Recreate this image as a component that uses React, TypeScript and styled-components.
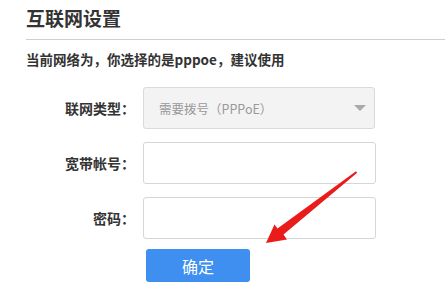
import React from 'react';
import styled, { createGlobalStyle } from 'styled-components';

const GlobalStyle = createGlobalStyle`
  html, body {
    margin: 0;
    padding: 0;
    background: #fff;
  }
  body {
    font-family: "Noto Sans CJK SC", "Noto Sans", sans-serif;
    color: #333;
  }
`;

const Page = styled.div`
  position: relative;
  width: 445px;
  height: 307px;
  overflow: hidden;
  padding-left: 26px;
  box-sizing: border-box;
`;

const Title = styled.h1`
  margin: 0;
  padding: 5px 0 8px;
  font-size: 19px;
  line-height: 26px;
  font-weight: 700;
  color: #333;
  border-bottom: 1px solid #cfcfcf;
`;

const Notice = styled.p`
  margin: 9px 0 0;
  font-size: 13.5px;
  line-height: 20px;
  font-weight: 700;
  color: #333;
`;

const Form = styled.div`
  display: grid;
  grid-template-columns: 109px 233px;
  grid-auto-rows: 42px;
  column-gap: 8px;
  row-gap: 13px;
  margin-top: 18px;
`;

const Label = styled.label`
  display: flex;
  align-items: center;
  justify-content: flex-end;
  font-size: 14px;
  font-weight: 700;
  color: #333;
  white-space: nowrap;
`;

const Select = styled.div`
  display: flex;
  align-items: center;
  justify-content: space-between;
  box-sizing: border-box;
  width: 232px;
  padding: 0 8px 0 15px;
  background: #f3f3f3;
  border: 1px solid #dadada;
  border-radius: 3px;
  font-size: 12.5px;
  color: #999;
`;

const Caret = styled.span`
  width: 0;
  height: 0;
  border-left: 6px solid transparent;
  border-right: 6px solid transparent;
  border-top: 6px solid #aaa;
`;

const Input = styled.input`
  box-sizing: border-box;
  width: 233px;
  height: 100%;
  border: 1px solid #d6d6d6;
  border-radius: 3px;
  background: #fff;
  outline: none;
  padding: 0 10px;
  font-size: 13px;
`;

const Actions = styled.div`
  margin: 10px 0 0 120px;
`;

const Button = styled.button`
  width: 104px;
  height: 33px;
  border: none;
  border-radius: 3px;
  background: #3e8ff0;
  color: #fff;
  font-family: "Noto Sans CJK SC", sans-serif;
  font-size: 16px;
  cursor: pointer;
`;

const Overlay = styled.svg`
  position: absolute;
  left: 0;
  top: 0;
  pointer-events: none;
`;

export default function App() {
  return (
    <>
      <GlobalStyle />
      <Page>
        <Title>互联网设置</Title>
        <Notice>当前网络为，你选择的是pppoe，建议使用</Notice>
        <Form>
          <Label>联网类型：</Label>
          <Select>
            需要拨号（PPPoE）
            <Caret />
          </Select>
          <Label>宽带帐号：</Label>
          <Input type="text" />
          <Label>密码：</Label>
          <Input type="password" />
        </Form>
        <Actions>
          <Button>确定</Button>
        </Actions>
        <Overlay width="445" height="307" viewBox="0 0 445 307">
          <polygon
            points="266,243 287,239.5 283.5,234.5 357.2,172.8 356,171.2 277.5,228.5 274.5,224.5"
            fill="#ea1b1b"
          />
        </Overlay>
      </Page>
    </>
  );
}
